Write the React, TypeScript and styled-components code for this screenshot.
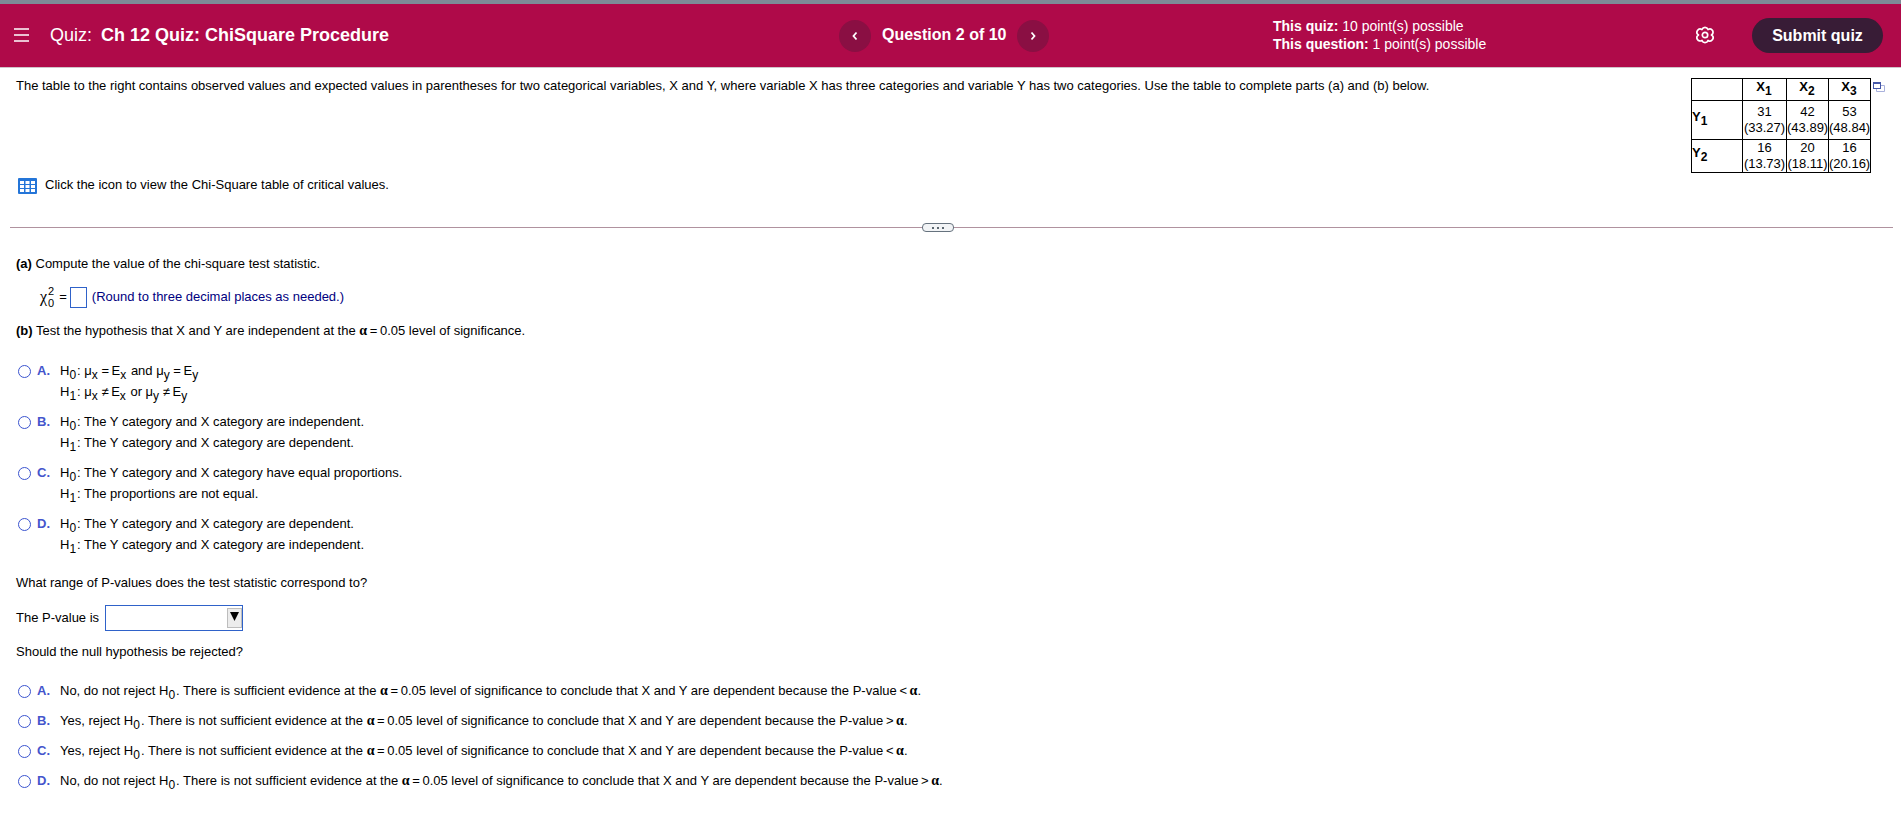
import React from "react";
import styled, { createGlobalStyle } from "styled-components";

const GlobalStyle = createGlobalStyle`
  *, *::before, *::after { box-sizing: border-box; }
  body { margin: 0; background: #fff; }
  button, input, select { font: inherit; }
`;

const Page = styled.div`
  font-family: "Liberation Sans", Arial, sans-serif;
  font-size: 13px;
  line-height: 20px;
  color: #000;
`;

const Header = styled.header`
  display: grid;
  grid-template-columns: 825fr 434fr 610fr;
  align-items: center;
  height: 68px;
  padding: 0 18px 0 14px;
  border-top: 4px solid #7d8a96;
  border-bottom: 1px solid #d0c4ca;
  background: #af0a49;
  color: #fff;
`;

const HeaderGroup = styled.div<{ $gap: number }>`
  display: flex;
  align-items: center;
  gap: ${(p) => p.$gap}px;
`;

const PlainButton = styled.button`
  display: flex;
  flex: none;
  padding: 0;
  border: 0;
  background: none;
  color: inherit;
  cursor: pointer;
`;

const Title = styled.h1`
  display: flex;
  gap: 9px;
  margin: 0;
  padding-bottom: 2px;
  font-size: 18px;
  font-weight: 700;
`;

const TitlePrefix = styled.span`
  font-weight: 400;
`;

const RoundButton = styled(PlainButton)`
  align-items: center;
  justify-content: center;
  width: 32px;
  height: 32px;
  border-radius: 50%;
  background: #8a0f43;
`;

const QuestionCount = styled.span`
  padding-bottom: 2px;
  font-size: 16px;
  font-weight: 700;
`;

const Points = styled.div`
  flex: 1;
  padding-bottom: 2px;
  font-size: 14px;
  line-height: 18px;
`;

const HeaderIconButton = styled(PlainButton)`
  padding-bottom: 2px;
`;

const SubmitButton = styled.button`
  flex: none;
  width: 131px;
  height: 35px;
  margin-left: 20px;
  padding: 0;
  border: 0;
  border-radius: 18px;
  background: #381c36;
  color: #fff;
  font-size: 16px;
  font-weight: 700;
  cursor: pointer;
`;

const Intro = styled.section`
  display: flex;
  justify-content: space-between;
  align-items: flex-start;
  padding: 8px 16px 0;
`;

const IntroText = styled.div`
  display: flex;
  flex-direction: column;
  gap: 79px;
`;

const Paragraph = styled.p`
  margin: 0;
`;

const IconLine = styled.div`
  display: flex;
  align-items: center;
  gap: 8px;
  padding-left: 2px;
`;

const TableButton = styled(PlainButton)`
  padding-top: 2px;
`;

const TableArea = styled.div`
  display: flex;
  align-items: flex-start;
  gap: 2px;
  padding-top: 2px;
`;

const PopoutButton = styled(PlainButton)`
  margin-top: 4px;
`;

const DataTable = styled.table`
  border-collapse: collapse;
  table-layout: fixed;
  width: 180px;
  line-height: 16px;
  text-align: center;

  th, td { padding: 0; border: 1px solid #000; }
  thead th { padding-bottom: 5px; }
  tbody th { padding-bottom: 6px; text-align: left; }
`;

const ColumnHead = styled.th<{ $width: number }>`
  width: ${(p) => p.$width}px;
  height: 22px;
`;

const ValueRow = styled.tr<{ $height: number }>`
  height: ${(p) => p.$height}px;
`;

const Divider = styled.div`
  display: flex;
  align-items: center;
  margin: 28px 8px 0 10px;
`;

const DividerLine = styled.div<{ $share: number }>`
  flex: ${(p) => p.$share};
  height: 1px;
  background: #b0929f;
`;

const DividerHandle = styled(PlainButton)`
  align-items: center;
  justify-content: center;
  gap: 3px;
  width: 32px;
  height: 9px;
  border: 1px solid #66727e;
  border-radius: 4px;
  background: #f2f4f6;
`;

const Dot = styled.span`
  width: 2px;
  height: 2px;
  background: #5c6770;
`;

const Questions = styled.main`
  padding: 22px 16px 0;
`;

const AnswerLine = styled.div`
  display: flex;
  align-items: center;
  height: 26px;
  margin: 10px 0 11px 24px;
`;

const Chi = styled.span`
  display: flex;
  align-items: center;
  gap: 1px;
  margin-right: 5px;
  font-family: "Liberation Serif", "Times New Roman", serif;
  font-size: 16px;
`;

const Scripts = styled.span`
  display: flex;
  flex-direction: column;
  font-family: "Liberation Sans", Arial, sans-serif;
  font-size: 11px;
  line-height: 12px;
`;

const AnswerInput = styled.input`
  width: 17px;
  height: 21px;
  margin: 0 5px 0 3px;
  padding: 0;
  border: 1px solid #2f62c9;
  background: #fff;
`;

const Hint = styled.span`
  color: #000080;
`;

const Choices = styled.fieldset<{ $gap: number }>`
  display: flex;
  flex-direction: column;
  gap: ${(p) => p.$gap}px;
  margin: 0;
  padding: 0;
  border: 0;
`;

const HypothesisChoices = styled(Choices)`
  margin: 20px 0 18px;
`;

const ConclusionChoices = styled(Choices)`
  margin-top: 19px;
`;

const Choice = styled.label`
  display: grid;
  grid-template-columns: 13px 17px auto;
  justify-content: start;
  column-gap: 6px;
  padding-left: 2px;
`;

const Radio = styled.input`
  appearance: none;
  width: 13px;
  height: 13px;
  margin: 4px 0 0;
  border: 1px solid #3b54cf;
  border-radius: 50%;
  background: #fff;
`;

const Letter = styled.span`
  color: #4455cc;
  font-weight: 700;
`;

const ChoiceText = styled.span`
  display: flex;
  flex-direction: column;
  gap: 1px;
`;

const Subscript = styled.sub`
  margin-right: 1px;
  font-size: 12px;
  line-height: 0;
  vertical-align: -4px;
`;

const Greek = styled.span`
  font-family: "Liberation Serif", "Times New Roman", serif;
  font-size: 14px;
  font-weight: 700;
  line-height: 0;
`;

const SelectLine = styled.label`
  display: flex;
  align-items: center;
  gap: 6px;
  margin: 12px 0 11px;
`;

const SelectFrame = styled.span`
  position: relative;
  display: flex;
`;

const Select = styled.select`
  appearance: none;
  width: 138px;
  height: 26px;
  padding: 0 20px 0 4px;
  border: 1px solid #2f62c9;
  border-radius: 0;
  background: #fff;
`;

const SelectArrow = styled.span`
  position: absolute;
  top: 3px;
  right: 1px;
  display: flex;
  justify-content: center;
  width: 15px;
  height: 20px;
  padding-top: 3px;
  border: 1px solid #bdbdbd;
  background: #ececec;
  pointer-events: none;
`;

const Sub = ({ children }: { children: React.ReactNode }) => <Subscript>{children}</Subscript>;
const Alpha = () => <Greek>α</Greek>;

const MenuIcon = () => (
  <svg width="15" height="14" viewBox="0 0 15 14" stroke="#fff" aria-hidden="true">
    <path d="M0 1h15M0 7h15M0 13h15" strokeWidth="1.6" />
  </svg>
);

const Chevron = ({ d }: { d: string }) => (
  <svg width="8" height="10" viewBox="0 0 8 10" fill="none" stroke="#fff" strokeWidth="1.8" aria-hidden="true">
    <path d={d} />
  </svg>
);

const GearIcon = () => (
  <svg width="18" height="20" viewBox="0 0 18 20" fill="none" stroke="#fff" strokeWidth="1.7" strokeLinejoin="round" aria-hidden="true">
    <path d="M6 4.500A3.200 3.200 0 0 1 12 4.500A3.200 3.200 0 0 1 15.500 10A3.200 3.200 0 0 1 12 15.500A3.200 3.200 0 0 1 6 15.500A3.200 3.200 0 0 1 2.500 10A3.200 3.200 0 0 1 6 4.500z" />
    <circle cx="9" cy="10" r="2.700" />
  </svg>
);

const GridIcon = () => (
  <svg width="19" height="16" viewBox="0 0 19 16" aria-hidden="true">
    <rect width="19" height="16" rx="1" fill="#2475d8" />
    <path
      fill="#fff"
      d="M2 3h4v3H2zM7.500 3h4v3h-4zM13 3h4v3h-4zM2 7h4v3H2zM7.500 7h4v3h-4zM13 7h4v3h-4zM2 11h4v3H2zM7.500 11h4v3h-4zM13 11h4v3h-4z"
    />
  </svg>
);

const PopoutIcon = () => (
  <svg width="12" height="10" viewBox="0 0 12 10" fill="none" aria-hidden="true">
    <path d="M8 3.500h3.500v6h-8V7" stroke="#a9b1dc" />
    <rect x=".5" y=".5" width="7" height="6" fill="#fff" stroke="#4658a8" />
    <path d="M0 1h8" stroke="#4658a8" strokeWidth="2" />
  </svg>
);

const rows = [
  { n: 1, height: 39, cells: [["31", "(33.27)"], ["42", "(43.89)"], ["53", "(48.84)"]] },
  { n: 2, height: 33, cells: [["16", "(13.73)"], ["20", "(18.11)"], ["16", "(20.16)"]] },
];

const hypotheses: { letter: string; h0: React.ReactNode; h1: React.ReactNode }[] = [
  {
    letter: "A",
    h0: <>μ<Sub>x</Sub>{"\u2009=\u2009"}E<Sub>x</Sub> and μ<Sub>y</Sub>{"\u2009=\u2009"}E<Sub>y</Sub></>,
    h1: <>μ<Sub>x</Sub>{"\u2009≠\u2009"}E<Sub>x</Sub> or μ<Sub>y</Sub>{"\u2009≠\u2009"}E<Sub>y</Sub></>,
  },
  {
    letter: "B",
    h0: "The Y category and X category are independent.",
    h1: "The Y category and X category are dependent.",
  },
  {
    letter: "C",
    h0: "The Y category and X category have equal proportions.",
    h1: "The proportions are not equal.",
  },
  {
    letter: "D",
    h0: "The Y category and X category are dependent.",
    h1: "The Y category and X category are independent.",
  },
];

const conclusions = [
  { letter: "A", start: "No, do not reject H", evidence: "is", sign: "<" },
  { letter: "B", start: "Yes, reject H", evidence: "is not", sign: ">" },
  { letter: "C", start: "Yes, reject H", evidence: "is not", sign: "<" },
  { letter: "D", start: "No, do not reject H", evidence: "is not", sign: ">" },
];

export default function App() {
  return (
    <Page>
      <GlobalStyle />
      <Header>
        <HeaderGroup $gap={21}>
          <HeaderIconButton aria-label="Menu"><MenuIcon /></HeaderIconButton>
          <Title><TitlePrefix>Quiz:</TitlePrefix>Ch 12 Quiz: ChiSquare Procedure</Title>
        </HeaderGroup>
        <HeaderGroup $gap={11}>
          <RoundButton aria-label="Previous question"><Chevron d="M5.500 1.500 2.500 5l3 3.500" /></RoundButton>
          <QuestionCount>Question 2 of 10</QuestionCount>
          <RoundButton aria-label="Next question"><Chevron d="M2.500 1.500 5.500 5l-3 3.500" /></RoundButton>
        </HeaderGroup>
        <HeaderGroup $gap={18}>
          <Points>
            <div><b>This quiz:</b> 10 point(s) possible</div>
            <div><b>This question:</b> 1 point(s) possible</div>
          </Points>
          <HeaderIconButton aria-label="Settings"><GearIcon /></HeaderIconButton>
          <SubmitButton>Submit quiz</SubmitButton>
        </HeaderGroup>
      </Header>

      <Intro>
        <IntroText>
          <Paragraph>
            The table to the right contains observed values and expected values in parentheses for two categorical
            variables, X and Y, where variable X has three categories and variable Y has two categories. Use the table
            to complete parts (a) and (b) below.
          </Paragraph>
          <IconLine>
            <TableButton aria-label="Chi-Square table"><GridIcon /></TableButton>
            <span>Click the icon to view the Chi-Square table of critical values.</span>
          </IconLine>
        </IntroText>
        <TableArea>
          <DataTable>
            <thead>
              <tr>
                <ColumnHead as="td" $width={51} />
                <ColumnHead $width={44}>X<Sub>1</Sub></ColumnHead>
                <ColumnHead $width={42}>X<Sub>2</Sub></ColumnHead>
                <ColumnHead $width={42}>X<Sub>3</Sub></ColumnHead>
              </tr>
            </thead>
            <tbody>
              {rows.map((row) => (
                <ValueRow key={row.n} $height={row.height}>
                  <th>Y<Sub>{row.n}</Sub></th>
                  {row.cells.map(([observed, expected]) => (
                    <td key={expected}>{observed}<br />{expected}</td>
                  ))}
                </ValueRow>
              ))}
            </tbody>
          </DataTable>
          <PopoutButton aria-label="Open table in new window"><PopoutIcon /></PopoutButton>
        </TableArea>
      </Intro>

      <Divider>
        <DividerLine $share={912} />
        <DividerHandle aria-label="Resize"><Dot /><Dot /><Dot /></DividerHandle>
        <DividerLine $share={939} />
      </Divider>

      <Questions>
        <Paragraph><b>(a)</b> Compute the value of the chi-square test statistic.</Paragraph>
        <AnswerLine>
          <Chi>χ<Scripts><span>2</span><span>0</span></Scripts></Chi>
          =
          <AnswerInput aria-label="Chi-square test statistic" />
          <Hint>(Round to three decimal places as needed.)</Hint>
        </AnswerLine>
        <Paragraph>
          <b>(b)</b> Test the hypothesis that X and Y are independent at the <Alpha />{"\u2009=\u2009"}0.05 level of
          significance.
        </Paragraph>

        <HypothesisChoices $gap={10} aria-label="Hypotheses">
          {hypotheses.map((h) => (
            <Choice key={h.letter}>
              <Radio type="radio" name="hypotheses" />
              <Letter>{h.letter}.</Letter>
              <ChoiceText>
                <span>H<Sub>0</Sub>: {h.h0}</span>
                <span>H<Sub>1</Sub>: {h.h1}</span>
              </ChoiceText>
            </Choice>
          ))}
        </HypothesisChoices>

        <Paragraph>What range of P-values does the test statistic correspond to?</Paragraph>
        <SelectLine>
          The P-value is
          <SelectFrame>
            <Select defaultValue=""><option value="" /></Select>
            <SelectArrow>
              <svg width="9" height="9" viewBox="0 0 9 9" aria-hidden="true"><path d="M0 0h9L4.500 9z" /></svg>
            </SelectArrow>
          </SelectFrame>
        </SelectLine>
        <Paragraph>Should the null hypothesis be rejected?</Paragraph>

        <ConclusionChoices $gap={10} aria-label="Conclusion">
          {conclusions.map((c) => (
            <Choice key={c.letter}>
              <Radio type="radio" name="conclusion" />
              <Letter>{c.letter}.</Letter>
              <span>
                {c.start}<Sub>0</Sub>. There {c.evidence} sufficient evidence at the <Alpha />
                {"\u2009=\u2009"}0.05 level of significance to conclude that X and Y are dependent because the
                P-value{`\u2009${c.sign}\u2009`}<Alpha />.
              </span>
            </Choice>
          ))}
        </ConclusionChoices>
      </Questions>
    </Page>
  );
}
